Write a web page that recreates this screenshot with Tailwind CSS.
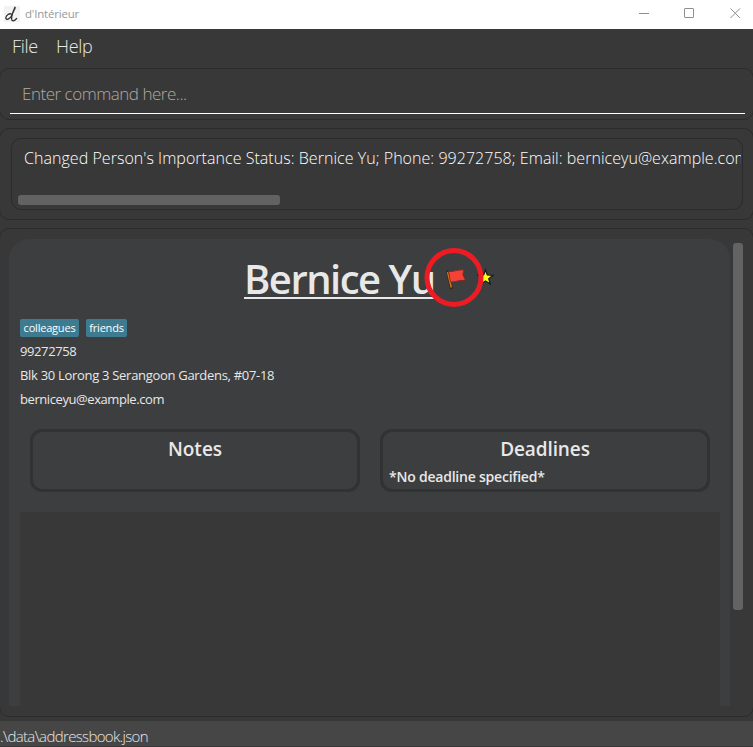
<!DOCTYPE html>
<html lang="en">
<head>
<meta charset="utf-8">
<title>d'Intérieur</title>
<script src="https://cdn.jsdelivr.net/npm/@tailwindcss/browser@4"></script>
</head>
<body class="w-[753px] h-[747px] overflow-hidden bg-[#383838] font-['Open_Sans','Noto_Sans',sans-serif] text-[#e8e8e8] flex flex-col">
<header class="h-[29px] shrink-0 bg-white flex items-center pl-1 text-[#999]">
  <svg class="size-4 bg-[#f3f3f3] mt-[-2px]" viewBox="0 0 16 16" fill="none" stroke="#333" stroke-linecap="round"><path stroke-width="1.300" d="M7.800 8.200C5.500 6.800 2 9.300 1.800 12c0 2.400 4.200 1.500 6-2.500"/><path stroke-width="1.300" d="M11 1.300C9.500 4.500 7.500 9 7.600 13c.4 3 2.800 2 5-.5"/><path stroke-width=".8" d="M11 1.200c1 .3.200 2-2 5.800"/></svg>
  <span class="ml-[5px] text-[11.500px] leading-4 mt-[-2px] whitespace-nowrap tracking-[-0.2px]">d'Intérieur</span>
  <svg class="ml-auto mr-[12px] mt-[-3px] w-[102px] h-[11px]" viewBox="0 0 102 11" fill="none" stroke="#8f8f8f"><path d="M0 5.500h10"/><rect x="45.500" y=".5" width="9" height="9" rx=".5"/><path d="M91.500 .5l9.500 9.500M101 .5L91.500 10"/></svg>
</header>
<nav class="h-[39px] shrink-0 flex gap-[18px] pl-3 pt-[4px] text-[18px] leading-[26px] font-light">
  <span class="w-[26px] whitespace-nowrap tracking-[-0.3px]">File</span><span class="whitespace-nowrap tracking-[-0.3px]">Help</span>
</nav>
<section class="h-[52px] shrink-0 -mx-px border border-[#2b2b2b] rounded-[10px] pl-[10px] pr-2 pt-[11px]">
  <div class="h-[34px] border-b border-white pl-3 text-[17px] leading-[28px] font-light text-[#b0aba3] whitespace-nowrap tracking-[-0.48px]">Enter command here...</div>
</section>
<section class="h-[92px] mt-2 shrink-0 -mx-px border border-[#2b2b2b] rounded-[10px] pl-[11px] pr-[10px] pt-[9px]">
  <div class="h-[72px] border border-[#2b2b2b] rounded-[10px] pl-3 pr-px pt-1">
    <div class="h-[52px] overflow-hidden text-[16px] leading-[30px] font-light text-white whitespace-nowrap tracking-[0.04px]">Changed Person's Importance Status: Bernice Yu; Phone: 99272758; Email: berniceyu@example.com</div>
    <div class="ml-[-6px] w-[262px] h-[10px] rounded-[3px] bg-[#626262]"></div>
  </div>
</section>
<main class="h-[489px] mt-2 shrink-0 -mx-px border border-[#2b2b2b] rounded-[10px] pl-[9px] pt-[10px] flex">
  <article class="w-[721px] h-[467px] rounded-t-[20px] bg-[#3c3e3f] pl-[11px] pr-[10px] flex flex-col">
    <div class="h-[80px] relative">
      <h1 class="absolute left-[224px] top-[11px] w-[190px] h-[49px] border-b-2 border-[#e8e8e8] text-[40px] leading-[57px] font-semibold whitespace-nowrap tracking-[-1.5px]">Bernice Yu</h1>
      <svg class="absolute left-[404px] top-[8px] w-[72px] h-[62px]" viewBox="424 247 72 62">
        <path d="M485.500 270l1.800 5 5.700.3-4.300 3.500 1.500 5.200-4.700-3-4.700 3 1.500-5.200-4.300-3.500 5.700-.3z" fill="#ff1" stroke="#141a1c" stroke-width="1.200"/>
        <path d="M447.600 272l3.700 15.500" stroke="#3b2515" stroke-width="3" stroke-linecap="round"/><path d="M447.600 272l3.700 15.500" stroke="#d57a19" stroke-width="1.500"/>
        <path d="M448.500 271.500c5 .5 9-2 15.500-1.600l-1.200 4.600 2.700 6c-5-1-9.500 1.500-15 1.700z" fill="#f44336" stroke="#812820" stroke-width=".9" stroke-linejoin="round"/>
        <circle cx="454" cy="277.500" r="27" fill="none" stroke="#ed1c24" stroke-width="5"/>
      </svg>
    </div>
    <div class="flex gap-[7px] h-[18px] text-[11px] leading-[17px] text-white">
      <span class="w-[59px] text-center rounded-[2px] bg-[#3e7b91] whitespace-nowrap tracking-[-0.2px]">colleagues</span><span class="w-[41px] text-center rounded-[2px] bg-[#3e7b91] whitespace-nowrap tracking-[-0.2px]">friends</span>
    </div>
    <div class="mt-[2px] text-[13px] leading-6 h-[90px] whitespace-nowrap tracking-[-0.3px]"><p class="tracking-[-0.4px]">99272758</p><p>Blk 30 Lorong 3 Serangoon Gardens, #07-18</p><p class="tracking-[-0.42px]">berniceyu@example.com</p></div>
    <div class="flex gap-5 px-[10px] h-[63px]">
      <div class="w-[330px] border-3 border-[#313232] rounded-[12px] pt-[5px] px-[6px]"><h2 class="text-center text-[19px] leading-[24px] font-semibold">Notes</h2></div>
      <div class="w-[330px] border-3 border-[#313232] rounded-[12px] pt-[5px] px-[6px]"><h2 class="text-center text-[19px] leading-[24px] font-semibold tracking-[-0.1px]">Deadlines</h2><p class="mt-[5px] text-[14px] leading-[22px] font-semibold whitespace-nowrap tracking-[-0.22px]">*No deadline specified*</p></div>
    </div>
    <div class="mt-5 flex-1 bg-[#383838]"></div>
  </article>
  <div class="ml-[3px] mt-1 w-[10px] h-[367px] rounded-[3px] bg-[#636363]"></div>
</main>
<footer class="mt-1 h-[26px] bg-[#464646] border-b border-[#383838] text-[15px] leading-[31px] font-light whitespace-nowrap tracking-[-0.65px]">.\data\addressbook.json</footer>
</body>
</html>
